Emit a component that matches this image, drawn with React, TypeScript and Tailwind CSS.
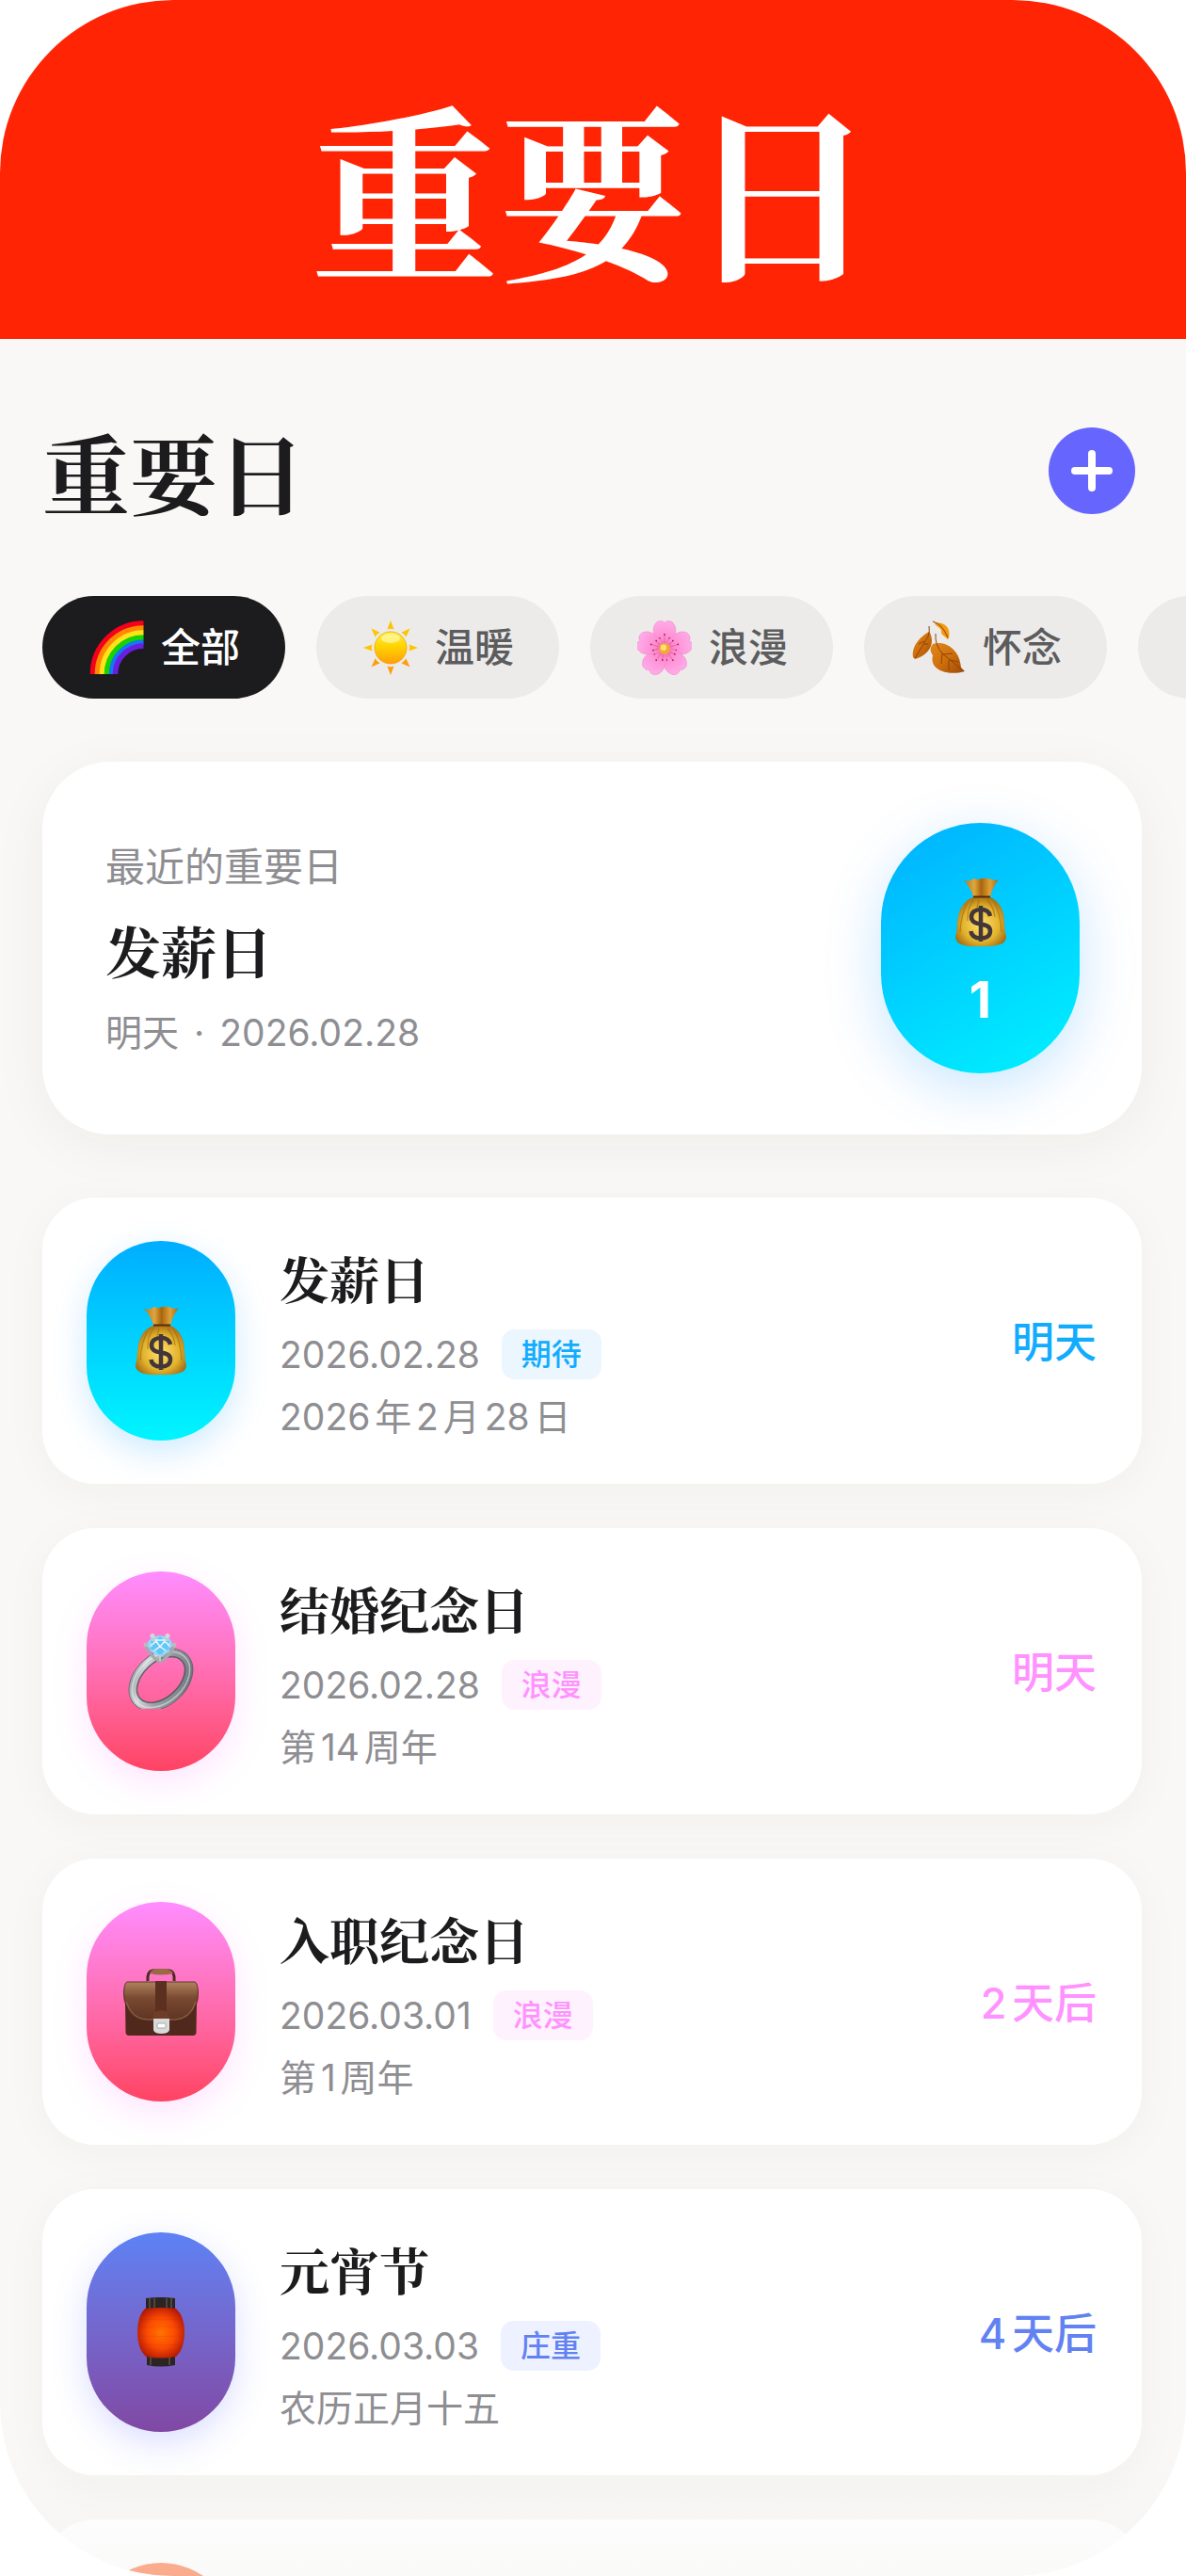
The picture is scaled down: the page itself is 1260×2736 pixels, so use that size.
import type { ReactNode } from 'react';

function Rainbow({ className }: { className: string }) {
  const bands = [
    ['#f5001d', 54],
    ['#ff8a00', 49],
    ['#ffe21a', 44],
    ['#17d400', 39],
    ['#1279f2', 34],
    ['#6a1fe0', 30],
  ] as const;
  return (
    <svg viewBox="0 0 58 58" className={className} aria-hidden="true">
      {bands.map(([color, r]) => (
        <path key={color} d={`M${57.5 - r} 57 A${r} ${r} 0 0 1 57.5 ${57 - r}`} fill="none" stroke={color} strokeWidth="5.6" />
      ))}
    </svg>
  );
}

function Sun({ className }: { className: string }) {
  return (
    <svg viewBox="0 0 58 58" className={className} aria-hidden="true">
      <defs>
        <linearGradient id="sunBody" x1="0" y1="0" x2="0" y2="1">
          <stop offset="0" stopColor="#fff04a" />
          <stop offset=".45" stopColor="#ffd500" />
          <stop offset="1" stopColor="#ff9d0a" />
        </linearGradient>
      </defs>
      {[0, 45, 90, 135, 180, 225, 270, 315].map((a) => (
        <path key={a} d="M29 0 L32.600 9.500 Q29 8 25.400 9.500 Z" fill={a > 90 && a < 270 ? '#ff9d0a' : '#ffc400'} transform={`rotate(${a} 29 29)`} />
      ))}
      <circle cx="29" cy="29" r="17" fill="url(#sunBody)" stroke="#f2a100" strokeWidth=".8" />
      <ellipse cx="29" cy="19" rx="10" ry="5" fill="#fff9a8" opacity=".7" />
    </svg>
  );
}

function Blossom({ className }: { className: string }) {
  return (
    <svg viewBox="0 0 58 58" className={className} aria-hidden="true">
      <defs>
        <radialGradient id="petal" cx="29" cy="30" r="30" gradientUnits="userSpaceOnUse">
          <stop offset="0" stopColor="#f0559a" />
          <stop offset=".35" stopColor="#ff8ccf" />
          <stop offset="1" stopColor="#ffaceb" />
        </radialGradient>
      </defs>
      {[0, 72, 144, 216, 288].map((a) => (
        <g key={a} transform={`rotate(${a} 29 30)`}>
          <path d="M29 31 C20 24 14 11 19 4 C21 0 26 0 28 1.500 L29 3 L30 1.500 C32 0 37 0 39 4 C44 11 38 24 29 31Z" fill="url(#petal)" stroke="#f585cd" strokeWidth=".6" />
          <path d="M29 26 V16 M27 24 L24 19.500 M31 24 L34 19.500" stroke="#dd5a9f" strokeWidth=".7" />
          <circle cx="29" cy="15" r=".9" fill="#a3184f" />
          <circle cx="23.700" cy="19" r=".9" fill="#a3184f" />
          <circle cx="34.300" cy="19" r=".9" fill="#a3184f" />
        </g>
      ))}
      <circle cx="29" cy="30" r="6" fill="#f3a83a" />
      <circle cx="28" cy="28.800" r="3.200" fill="#ffe06b" />
    </svg>
  );
}

function Leaves({ className }: { className: string }) {
  return (
    <svg viewBox="0 0 58 58" className={className} aria-hidden="true">
      <defs>
        <linearGradient id="leaf" x1="0" y1="0" x2="1" y2="1">
          <stop offset="0" stopColor="#e0881a" />
          <stop offset=".5" stopColor="#cf6f0c" />
          <stop offset="1" stopColor="#9c4a08" />
        </linearGradient>
      </defs>
      <path d="M19 12 C10 17 0 27 2 39 L4 41 C17 37 26 27 20 13Z" fill="url(#leaf)" />
      <path d="M19 6 Q20 12 18 17 L4 40 M14 22 L8 25 M13 25 L18 25" fill="none" stroke="#8c440a" strokeWidth="1" />
      <path d="M25 3 C33 1 43 6 40 19 L38.500 20 C36 16 31 16 32 10 C29 6 26 6 25 3Z" fill="#f59a10" />
      <path d="M23 1 Q33 4 39 18" fill="none" stroke="#9a5208" strokeWidth="1.200" />
      <path d="M23 25 C34 21 51 28 53 50 L57 54 L53 55 C39 58 19 53 23 37 Q18 31 23 25Z" fill="url(#leaf)" />
      <path d="M26 14 Q25 26 33 35 L56 54 M33 35 L32 46 M40 42 L40 53 M34 36 L44 35 M41 42 L50 44" fill="none" stroke="#8c440a" strokeWidth="1" />
    </svg>
  );
}

function MoneyBag({ className }: { className: string }) {
  return (
    <svg viewBox="0 0 56 74" className={className} aria-hidden="true">
      <defs>
        <radialGradient id="bag" cx=".5" cy=".55" r=".6">
          <stop offset="0" stopColor="#ffe070" />
          <stop offset=".6" stopColor="#e2b32c" />
          <stop offset="1" stopColor="#9c6410" />
        </radialGradient>
        <linearGradient id="neck" x1="0" y1="0" x2="1" y2="0">
          <stop offset="0" stopColor="#b87417" />
          <stop offset=".3" stopColor="#e0a63c" />
          <stop offset=".5" stopColor="#a8650f" />
          <stop offset=".75" stopColor="#dfa136" />
          <stop offset="1" stopColor="#a8650f" />
        </linearGradient>
      </defs>
      <path d="M10 3 Q16 5 21 1 Q25 3 29 1 Q35 0 39 2 Q43 4 47 2 Q40 11 38 21 H20 Q17 10 10 3Z" fill="url(#neck)" />
      <path d="M20 21 H38 C48 25 53 36 53 47 L54 59 Q57 65 51 70 Q41 74 28 73 Q12 74 5 70 Q-1 66 2 59 L3 48 C4 35 9 25 20 21Z" fill="url(#bag)" />
      <path d="M14 27 Q7 38 6 58 M20 24 Q13 34 14 46 M42 26 Q49 38 50 58 M35 24 Q42 32 43 42 M26 24 L24 32" fill="none" stroke="#a86d12" strokeWidth="1.200" opacity=".7" />
      <path d="M20 20.500 H38" stroke="#5b2a0a" strokeWidth="2" />
      <path d="M38 41 C37 36 33 34 28 34 C22 34 18 37 18 42 C18 53 38 46 38 57 C38 62 34 64.500 28 64.500 C22 64.500 18 62 17.500 57 M28 30 V68" fill="none" stroke="#42363a" strokeWidth="4.500" />
    </svg>
  );
}

function Ring({ className }: { className: string }) {
  return (
    <svg viewBox="0 0 74 80" className={className} aria-hidden="true">
      <defs>
        <linearGradient id="metal" x1="0" y1="0" x2="1" y2="1">
          <stop offset="0" stopColor="#83898f" />
          <stop offset=".25" stopColor="#d3d8dc" />
          <stop offset=".5" stopColor="#9aa0a6" />
          <stop offset=".8" stopColor="#7f868c" />
          <stop offset="1" stopColor="#5c636a" />
        </linearGradient>
      </defs>
      <g fill="none" transform="rotate(-42 37 49)">
        <ellipse cx="37" cy="49" rx="34" ry="23" stroke="#5d636a" strokeWidth="9.500" />
        <ellipse cx="37" cy="49" rx="34" ry="23" stroke="url(#metal)" strokeWidth="8" />
        <ellipse cx="37" cy="49" rx="35" ry="24" stroke="#eef1f3" strokeWidth="1.500" opacity=".55" />
        <ellipse cx="37" cy="49" rx="30" ry="19" stroke="#4f555b" strokeWidth="1.500" opacity=".7" />
      </g>
      <path d="M21 13 Q24 23 36 30 Q48 23 51 13" fill="none" stroke="#a3a9ae" strokeWidth="3" />
      <path d="M22 12 Q24 3 36 2 Q48 3 49 12 Q47 20 36 25 Q25 20 22 12Z" fill="#8fdcfd" />
      <path d="M26 8 L32 7 L36 3 L40 7 L46 8 L44 14 L48 16 L41 18 L36 24 L31 18 L24 16 L28 14Z" fill="#49b9f3" opacity=".65" />
      <path d="M28 7 H44 M26 13 L32 8 L36 14 L41 8 L46 13 M30 18 L36 14 L42 18" fill="none" stroke="#e6faff" strokeWidth="1.500" />
      <path d="M28 3 L30 9 M44 3 L42 9 M36 22 V29" stroke="#c3c8cc" strokeWidth="2" />
      <circle cx="28" cy="2.500" r="2.500" fill="#d5d9dc" />
      <circle cx="44" cy="2.500" r="2.500" fill="#d5d9dc" />
      <circle cx="21" cy="12" r="2.500" fill="#b6bbc0" />
      <circle cx="51" cy="12" r="2.500" fill="#b6bbc0" />
    </svg>
  );
}

function Briefcase({ className }: { className: string }) {
  return (
    <svg viewBox="0 0 80 72" className={className} aria-hidden="true">
      <defs>
        <linearGradient id="leather" x1="0" y1="0" x2="0" y2="1">
          <stop offset="0" stopColor="#b0835f" />
          <stop offset=".4" stopColor="#7a4a31" />
          <stop offset="1" stopColor="#5c3222" />
        </linearGradient>
      </defs>
      <path d="M26 14 Q25 4 31 3 H49 Q55 4 54 14" fill="none" stroke="#4b2a1c" strokeWidth="3" />
      <path d="M28 6 Q29 1 40 1 Q51 1 53 6 Q40 9 28 6Z" fill="#9b6a45" />
      <path d="M2 36 H78 L77.500 69 Q77 72 74 72 H6 Q3 72 2.500 69Z" fill="#50291c" />
      <path d="M4 15 H76 Q79 16 79.500 26 Q80 34 76 43 Q70 56 56 57 H24 Q10 56 4 43 Q0 34 .5 26 Q1 16 4 15Z" fill="url(#leather)" stroke="#43231a" strokeWidth=".8" />
      <path d="M3 36 Q9 54 25 55 H55 Q71 54 77 36" fill="none" stroke="#a17555" strokeWidth=".8" />
      <rect x="34" y="14" width="12" height="36" fill="#5b3020" />
      <path d="M31 55 Q31 45 40 45 Q49 45 49 55Z" fill="#6e3c27" />
      <path d="M32 54 H49 V66 Q48 70 40.500 70 Q33 70 32 66Z" fill="#d9d9d9" />
      <rect x="36" y="59" width="9" height="5" rx="1" fill="#fff" stroke="#a8a8a8" strokeWidth="1" />
    </svg>
  );
}

function Lantern({ className }: { className: string }) {
  return (
    <svg viewBox="0 0 52 74" className={className} aria-hidden="true">
      <defs>
        <radialGradient id="glow" cx=".5" cy=".5" r=".6">
          <stop offset="0" stopColor="#ff7400" />
          <stop offset=".5" stopColor="#fb4a02" />
          <stop offset="1" stopColor="#a81005" />
        </radialGradient>
      </defs>
      <path d="M10 1 Q26 -1 41 1 V14 H10Z M11 62 H41 V72 Q26 75 11 72Z" fill="#2a2522" />
      <path d="M14 1 V13 M19 1 V13 M32 1 V13 M37 1 V13 M15 62 V72 M35 62 V72" stroke="#75685a" strokeWidth="1" />
      <path d="M9 12 Q26 10 42 12 Q51 20 51 37 Q51 55 42 63 Q26 66 10 63 Q1 55 1 37 Q1 20 9 12Z" fill="url(#glow)" />
      <path d="M4 24 Q26 22 48 24 M2 32 Q26 30 50 32 M2 41 Q26 42 50 41 M4 50 Q26 52 48 50" fill="none" stroke="#c41f03" strokeWidth=".6" opacity=".25" />
    </svg>
  );
}

type Mood = 'expect' | 'romance' | 'solemn';

const moods: Record<Mood, { pill: string; tag: string; text: string; label: string }> = {
  expect: {
    pill: 'from-[#00adff] to-[#00f5ff] shadow-[0_12px_36px_rgba(0,150,255,0.2)]',
    tag: 'bg-[#ebf6ff] text-[#12acff]',
    text: 'text-[#12acff]',
    label: '期待',
  },
  romance: {
    pill: 'from-[#ff8cff] to-[#ff4262] shadow-[0_12px_36px_rgba(255,120,255,0.2)]',
    tag: 'bg-[#fff2ff] text-[#ff92ff]',
    text: 'text-[#ff92ff]',
    label: '浪漫',
  },
  solemn: {
    pill: 'from-[#5c82f5] to-[#8048a4] shadow-[0_12px_36px_rgba(90,110,255,0.22)]',
    tag: 'bg-[#eef1ff] text-[#6282f2]',
    text: 'text-[#6282f2]',
    label: '庄重',
  },
};

const filters: { label: string; icon: ReactNode; active?: boolean }[] = [
  { label: '全部', icon: <Rainbow className="size-[58px]" />, active: true },
  { label: '温暖', icon: <Sun className="size-[58px]" /> },
  { label: '浪漫', icon: <Blossom className="size-[58px]" /> },
  { label: '怀念', icon: <Leaves className="size-[58px]" /> },
];

const days: { title: string; date: string; note: string; left: string; mood: Mood; icon: ReactNode }[] = [
  { title: '发薪日', date: '2026.02.28', note: '2026年2月28日', left: '明天', mood: 'expect', icon: <MoneyBag className="h-[74px] w-14" /> },
  { title: '结婚纪念日', date: '2026.02.28', note: '第14周年', left: '明天', mood: 'romance', icon: <Ring className="h-20 w-[74px]" /> },
  { title: '入职纪念日', date: '2026.03.01', note: '第1周年', left: '2天后', mood: 'romance', icon: <Briefcase className="h-[72px] w-20" /> },
  { title: '元宵节', date: '2026.03.03', note: '农历正月十五', left: '4天后', mood: 'solemn', icon: <Lantern className="h-[74px] w-[52px]" /> },
];

const serif = "font-['Noto_Serif_CJK_SC','Noto_Serif_SC','Source_Han_Serif_SC','Noto_Sans_CJK_SC',serif] font-bold";

export default function App() {
  return (
    <div className="h-screen bg-white font-['Inter','Noto_Sans_CJK_SC',sans-serif] [text-autospace:normal]">
      <div className="relative flex h-full flex-col overflow-hidden rounded-[184px] bg-[#f9f8f6]">
        <header className="flex h-[360px] shrink-0 items-center justify-center bg-[#ff2404] pt-[34px]">
          <p className={`${serif} text-[200px] leading-none text-white`}>重要日</p>
        </header>

        <main className="pr-[47px] pl-[45px]">
          <div className="flex items-center justify-between pt-[94px] pr-[7px]">
            <h1 className={`${serif} text-[93px] leading-[92px] text-[#1c1c1e]`}>重要日</h1>
            <button type="button" aria-label="添加" className="flex size-[92px] items-center justify-center rounded-full bg-[#6666ff] text-white">
              <svg viewBox="0 0 44 44" className="size-11" fill="none" stroke="currentColor" strokeWidth="8" strokeLinecap="round" aria-hidden="true">
                <path d="M22 4 V40 M4 22 H40" />
              </svg>
            </button>
          </div>

          <nav aria-label="分类" className="-mr-[47px] flex gap-[33px] overflow-hidden pt-[87px]">
            {filters.map((f) => (
              <button
                key={f.label}
                type="button"
                aria-pressed={!!f.active}
                className={`flex h-[109px] shrink-0 items-center gap-[18px] rounded-full pr-12 pl-[50px] text-[42px] font-medium ${f.active ? 'bg-[#1c1c1e] text-white' : 'bg-[#ecebe9] text-[#5c5c5e]'}`}
              >
                {f.icon}
                <span>{f.label}</span>
              </button>
            ))}
            <button type="button" aria-label="期待" className="h-[109px] w-[259px] shrink-0 rounded-full bg-[#ecebe9]" />
          </nav>

          <section className="mt-[67px] flex items-center justify-between rounded-[72px] bg-white py-[65px] pr-[66px] pl-[67px] shadow-[0_12px_60px_rgba(60,40,20,0.05)]">
            <div className="flex flex-col pt-1 text-[#8e8e92]">
              <p className="text-[42px] leading-[60px]">最近的重要日</p>
              <h2 className={`${serif} mt-[22px] text-[59px] leading-[72px] text-[#1c1c1e]`}>发薪日</h2>
              <p className="mt-[22px] flex gap-4 text-[39px] leading-[60px]">
                <span>明天</span>
                <span>·</span>
                <span>2026.02.28</span>
              </p>
            </div>
            <div className="flex h-[266px] w-[211px] flex-col items-center rounded-full bg-linear-150 from-[#00b0ff] to-[#00f2ff] pt-[58px] shadow-[0_16px_60px_rgba(0,140,255,0.22)]">
              <MoneyBag className="h-[74px] w-14" />
              <span className="mt-6 text-[54px] leading-[64px] font-bold text-white">1</span>
            </div>
          </section>

          <ul className="mt-[67px] flex flex-col gap-[47px]">
            {days.map((d) => {
              const m = moods[d.mood];
              return (
                <li key={d.title} className="flex items-center rounded-[56px] bg-white py-[46px] pr-12 pl-[47px] shadow-[0_8px_48px_rgba(60,40,20,0.04)]">
                  <div className={`flex h-[212px] w-[158px] shrink-0 items-center justify-center rounded-full bg-linear-to-b ${m.pill}`}>
                    {d.icon}
                  </div>
                  <div className="ml-[47px] flex h-[212px] grow flex-col pt-[3px]">
                    <h3 className={`${serif} text-[53px] leading-[72px] text-[#1c1c1e]`}>{d.title}</h3>
                    <div className="mt-[19px] flex items-center gap-[23px]">
                      <span className="text-[39px] leading-[53px] text-[#8e8e92]">{d.date}</span>
                      <span className={`rounded-[14px] px-[21px] text-[32px] leading-[53px] font-medium ${m.tag}`}>{m.label}</span>
                    </div>
                    <p className="mt-[13px] text-[39px] leading-[54px] text-[#8e8e92]">{d.note}</p>
                  </div>
                  <span className={`pt-1 text-[45px] font-medium ${m.text}`}>{d.left}</span>
                </li>
              );
            })}
            <li className="flex h-[304px] shrink-0 rounded-[56px] bg-white py-[46px] pl-[47px]">
              <div className="h-[212px] w-[158px] rounded-full bg-linear-to-b from-[#ffa07a] to-[#ff6a88]" />
            </li>
          </ul>
        </main>
        <div className="pointer-events-none absolute inset-x-0 bottom-0 h-32 bg-linear-to-b from-transparent to-[#e6e6e3]/20" />
      </div>
    </div>
  );
}
